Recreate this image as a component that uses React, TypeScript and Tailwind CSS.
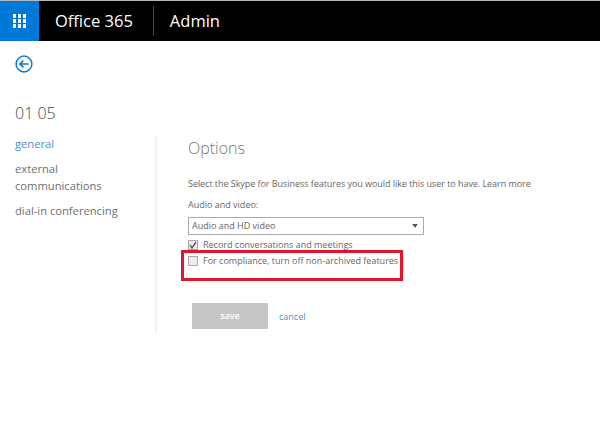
export default function App() {
  const font = { fontFamily: '"Open Sans", "Noto Sans", sans-serif' };
  return (
    <div className="relative h-[439px] w-[600px] overflow-hidden bg-white" style={font}>
      <div className="h-px bg-[#b5b5b5]" />
      <header className="flex h-[40px] items-stretch bg-black text-white">
        <div className="flex w-[39px] items-center justify-center bg-[#0078d7]">
          <div className="grid grid-cols-3 gap-[1.5px]">
            {Array.from({ length: 9 }).map((_, i) => (
              <span key={i} className="h-[3.5px] w-[3.5px] bg-white" />
            ))}
          </div>
        </div>
        <span className="ml-[16px] self-center text-[16.5px] leading-none">Office 365</span>
        <div className="my-[5px] ml-[20px] w-px bg-[#444]" />
        <span className="ml-[16px] self-center text-[16.5px] leading-none">Admin</span>
      </header>

      <div className="pl-[15px] pt-[14px]">
        <svg width="18" height="18" viewBox="0 0 18 18" fill="none" stroke="#0f78d4" className="block">
          <circle cx="9" cy="9" r="7.9" strokeWidth="1.5" />
          <path d="M13.5 9H5M8.3 5.6 4.9 9l3.4 3.4" strokeWidth="1.6" />
        </svg>
        <div className="mt-[29px] text-[16px] font-light leading-[22px] text-[#444]">01 05</div>
      </div>

      <div className="mt-[11px] flex">
        <nav className="w-[155px] pl-[15px] text-[11.2px] leading-[17px] text-[#6e6e6e]">
          <div className="text-[#4a90cc]">general</div>
          <div className="mt-[8px]">external<br />communications</div>
          <div className="mt-[8px]">dial-in conferencing</div>
        </nav>
        <main className="h-[198px] flex-1 border-l-2 border-[#f3f3f3] pl-[31px]">
          <h1 className="pt-[1px] text-[16px] font-light leading-[24px] text-[#777]">Options</h1>
          <p className="mt-[17px] text-[9px] leading-[14px] tracking-[-0.05px] text-[#666]">
            Select the Skype for Business features you would like this user to have. Learn more
          </p>
          <div className="mt-[7px] text-[9px] leading-[14px] text-[#666]">Audio and video:</div>
          <div className="mt-[5px] flex h-[18px] w-[236px] items-center justify-between border border-[#aaa] pl-[3px] pr-[5px] text-[9px] text-[#666]">
            <span>Audio and HD video</span>
            <svg width="6" height="4" viewBox="0 0 7 5"><path d="M0 0h7L3.5 5z" fill="#555" /></svg>
          </div>
          <div className="mt-[3px] flex h-[14px] items-center gap-[5px] text-[9px] text-[#666]">
            <span className="flex h-[10px] w-[10px] items-center justify-center border border-[#aaa] bg-[#e8e8e8]">
              <svg width="8" height="8" viewBox="0 0 8 8" fill="none"><path d="M1 4l2 3 4-6" stroke="#444" strokeWidth="1.3" /></svg>
            </span>
            <span>Record conversations and meetings</span>
          </div>
          <div className="mt-[2px] flex h-[14px] items-center gap-[5px] text-[9px] text-[#666]">
            <span className="h-[10px] w-[10px] border border-[#aaa] bg-[#eee]" />
            <span>For compliance, turn off non-archived features</span>
          </div>
          <div className="ml-[4px] mt-[35px] flex items-center">
            <button className="h-[26px] w-[76px] bg-[#c6c6c6] text-[9px] font-semibold text-white">save</button>
            <a className="ml-[11px] mt-[1px] text-[9px] text-[#4a90cc]">cancel</a>
          </div>
        </main>
      </div>

      <div className="absolute left-[181px] top-[250px] h-[31px] w-[222px] border-[3px] border-[#e0142a]" />
    </div>
  );
}
